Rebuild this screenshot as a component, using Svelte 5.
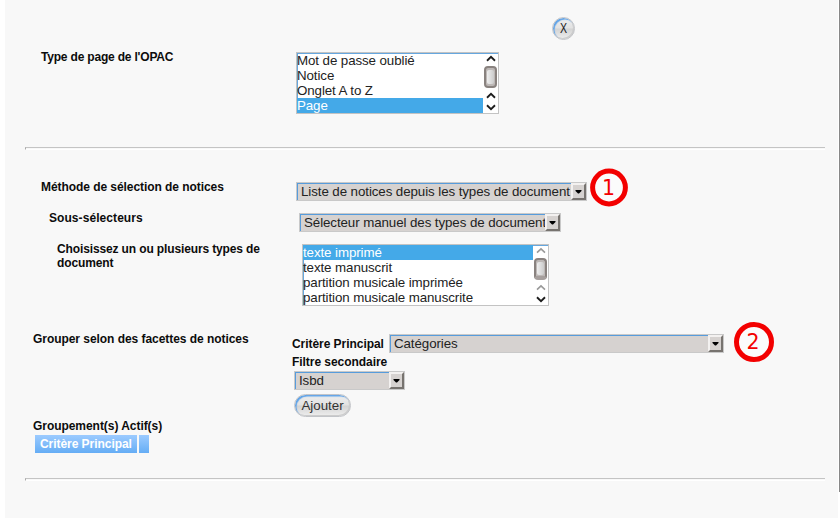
<script>
  const pageTypes = ['Mot de passe oublié', 'Notice', 'Onglet A to Z', 'Page'];
  const documentTypes = ['texte imprimé', 'texte manuscrit', 'partition musicale imprimée', 'partition musicale manuscrite'];
</script>

{#snippet chevron(up, dim)}
  <svg class="chevron" width="10" height="7" viewBox="0 0 10 7">
    <path d={up ? 'M1 5.7 5 1.9 9 5.7' : 'M1 1.3 5 5.1 9 1.3'} fill="none" stroke={dim ? '#999' : '#1c1c1c'} stroke-width={dim ? 1.6 : 1.9} />
  </svg>
{/snippet}

{#snippet listbox(items, selected, width, dim)}
  <div class="list" class:short={dim} style="width: {width}px">
    <div class="options">
      {#each items as item, i}
        <div class="option" class:selected={i === selected}>{item}</div>
      {/each}
    </div>
    <div class="scroll">
      {@render chevron(true, dim)}
      <div class="thumb"><i></i></div>
      {@render chevron(true, dim)}
      {@render chevron(false, false)}
    </div>
  </div>
{/snippet}

{#snippet combo(text, width)}
  <div class="combo" style="width: {width}px">
    <span>{text}</span>
    <b><svg width="7" height="4" viewBox="0 0 7 4"><path d="M0.5 0H6.5V1L4 3.5H3L0.5 1Z" fill="#000" /></svg></b>
  </div>
{/snippet}

<main>
  <section class="panel">
    <div class="close"><button class="round"><span>X</span></button></div>
    <div class="row page">
      <div class="label">Type de page de l'OPAC</div>
      {@render listbox(pageTypes, 3, 203, false)}
    </div>
    <div class="rule"></div>
    <div class="row method">
      <div class="label">Méthode de sélection de notices</div>
      {@render combo('Liste de notices depuis les types de document', 291)}
    </div>
    <div class="row sub">
      <div class="label">Sous-sélecteurs</div>
      {@render combo('Sélecteur manuel des types de document', 262)}
    </div>
    <div class="row types">
      <div class="label">Choisissez un ou plusieurs types de document</div>
      {@render listbox(documentTypes, 0, 247, true)}
    </div>
    <div class="row facets">
      <div class="label">Grouper selon des facettes de notices</div>
      <div class="fields">
        <div class="criterion"><span>Critère Principal</span>{@render combo('Catégories', 335)}</div>
        <div class="filter">Filtre secondaire</div>
        <div class="indent">{@render combo('Isbd', 111)}</div>
        <div class="indent"><button class="add">Ajouter</button></div>
      </div>
    </div>
    <div class="active">Groupement(s) Actif(s)</div>
    <div class="heads"><div>Critère Principal</div><div></div></div>
    <div class="rule"></div>
  </section>
  <div class="edge"></div>
  <svg class="mark one" width="40" height="40" viewBox="0 0 40 40"><circle cx="20" cy="19.5" r="16.4" /><text x="19.5" y="27">1</text></svg>
  <svg class="mark two" width="42" height="42" viewBox="0 0 42 42"><circle cx="21" cy="21" r="17.5" /><text x="20" y="28">2</text></svg>
</main>

<style>
  :global(body) { background: #fff; }
  main { position: relative; display: flex; width: 840px; height: 518px; overflow: hidden; font: bold 12px/14px "Liberation Sans", Arial, sans-serif; letter-spacing: -0.05px; color: #0c0c0c; }
  main * { box-sizing: border-box; }
  .panel { width: 833px; margin-left: 5px; padding: 17px 12px 0 20px; background: #f8f8f8; }
  .edge { width: 1px; height: 492px; margin-left: 1px; background: #888; }
  .close { height: 35px; padding-left: 527px; }
  button { display: block; height: 23px; padding: 0; color: #333; font: 13.333px/21px "Liberation Sans", Arial, sans-serif; border: 1px solid #c2c4c8; border-radius: 12px; background: linear-gradient(#eee 0%, #e2e2e2 48%, #d3d3d3 52%, #eee 100%); box-shadow: inset 1.5px 1.5px 1px #5fa3e8, inset -1px -1px #ccc; }
  .round { width: 23px; }
  .round span { display: block; font-size: 14px; color: #222; transform: scaleX(0.76); }
  .add { width: 57px; }
  .row { display: flex; align-items: flex-start; }
  .label { flex: none; margin-top: -2px; }
  .page { height: 95px; padding-left: 16px; }
  .page .label { width: 255px; letter-spacing: -0.19px; }
  .rule { width: 800px; height: 3px; border-top: 1px solid #c4c4c4; border-left: 1px solid #aaa; border-bottom: 1px solid #fff; }
  .method { height: 31px; margin-top: 32px; padding-left: 16px; }
  .method .label { width: 255px; letter-spacing: -0.06px; }
  .sub { height: 31px; padding-left: 24px; }
  .sub .label { width: 250px; letter-spacing: 0.07px; }
  .types { height: 90px; padding-left: 32px; }
  .types .label { width: 245px; padding-right: 35px; letter-spacing: -0.13px; }
  .facets { height: 85px; padding-left: 8px; }
  .facets .label { width: 259px; }
  .criterion { display: flex; height: 21px; }
  .criterion > span { width: 97px; padding-top: 3px; }
  .filter { height: 16px; }
  .indent { height: 23px; padding-left: 2px; }
  .active { height: 16px; padding-left: 8px; }
  .heads { display: flex; gap: 2px; height: 43px; padding-left: 10px; }
  .heads div { width: 10px; height: 18px; color: #fff; line-height: 18px; white-space: nowrap; background: linear-gradient(#9ccbff, #65adf5); }
  .heads div:first-child { width: 102px; padding-left: 5px; }
  .list { display: flex; height: 62px; color: #222; background: #fff; border: 1px solid #c3c3c3; box-shadow: inset 1px 1px #66a7df; font: 13.333px/15px "Liberation Sans", Arial, sans-serif; letter-spacing: -0.09px; }
  .options { flex: 1; }
  .option { height: 15px; white-space: nowrap; }
  .selected { color: #fff; background: #44a9e8; }
  .scroll { display: flex; flex-direction: column; align-items: center; width: 15px; padding-top: 1px; }
  .chevron { margin-top: 1px; margin-bottom: 4px; flex: none; }
  .thumb { flex: none; width: 13px; height: 22px; margin-bottom: 3px; border: 2px solid #89827f; border-radius: 4px; background: #bdb8b6; padding: 2px 1px; }
  .thumb i { display: block; width: 7px; height: 14px; border-radius: 2px; background: linear-gradient(90deg, #eee, #ccc); }
  .short .thumb { border-bottom-width: 4px; border-bottom-color: #a69f9d; }
  .short .thumb i { height: 13px; }
  .combo { display: flex; flex: none; height: 19px; padding: 1px 0 1px 4px; border: 1px solid #c9c9c9; box-shadow: inset 1px 1px #579cdc; background: #d6d2d0; color: #222; font: 13.333px/17px "Liberation Sans", Arial, sans-serif; letter-spacing: -0.085px; }
  .combo span { flex: 1; min-width: 0; white-space: nowrap; margin-top: -1px; }
  .combo b { display: flex; flex: none; align-items: center; justify-content: center; width: 15px; height: 17px; margin-top: -1px; border: 2px solid; border-color: #f3f1f0 #77736f #77736f #f3f1f0; background: #d6d2d0; }
  .mark { position: absolute; fill: none; stroke: #f30000; }
  .mark circle { stroke-width: 5; fill: #fbfbfb; }
  .mark text { stroke: none; fill: #f30000; font: 20.5px "DejaVu Sans", sans-serif; text-anchor: middle; }
  .one { left: 589px; top: 168px; }
  .two { left: 733px; top: 321px; }
</style>
